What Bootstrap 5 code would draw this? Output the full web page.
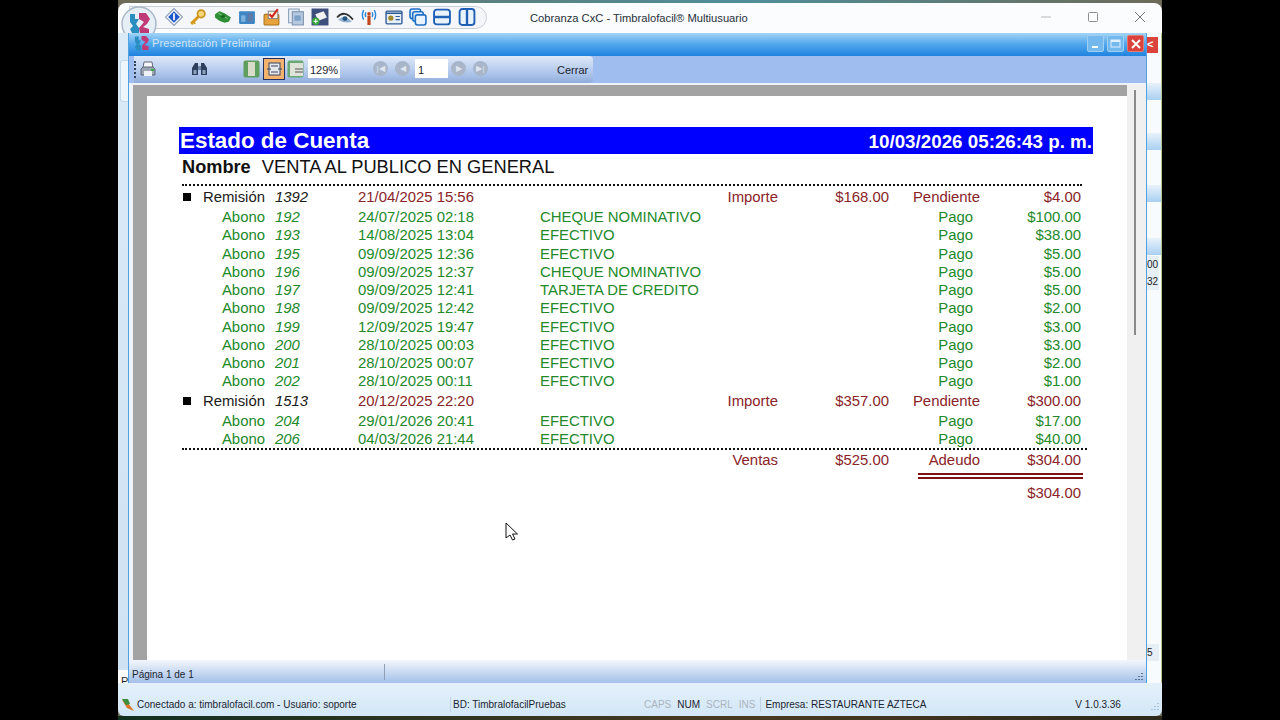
<!DOCTYPE html>
<html lang="es">
<head>
    <meta charset="UTF-8">
    <title>Cobranza CxC - Timbralofacil Multiusuario</title>
    <link href="https://cdn.jsdelivr.net/npm/bootstrap@5.3.0/dist/css/bootstrap.min.css" rel="stylesheet">
    <style>
        html, body { height: 720px; overflow: hidden; background: #000; }
        body { font-family: "Liberation Sans", Arial, sans-serif; font-size: 11px; color: #1c2530; }

        /* ventana principal */
        .app { width: 1044px; height: 720px; margin-left: 118px; padding-top: 3px; background: linear-gradient(90deg, #6d6a58, #4f8f9a 60%, #6d6a58); position: relative; }
        .app-title { height: 30px; background: #fbfcfd; border-radius: 8px 8px 0 0; overflow: hidden; position: relative; }
        .pill { margin-left: 11px; margin-top: -2px; height: 23px; width: 358px; border: 1px solid #c9cfd8; border-radius: 0 12px 12px 0; background: #f4f6f9; gap: 6.4px; padding-left: 35px; }
        .pill svg { width: 18px; height: 18px; flex: none; }
        .app-name { position: absolute; left: 412px; top: 7px; font-size: 11.2px; color: #27303a; }
        .win-btns { margin-left: auto; gap: 35px; padding-right: 16px; margin-top: -2px; }
        .logo { position: absolute; left: 3px; top: 3px; width: 36px; height: 36px; z-index: 3; }
        .app-body { height: 650px; background: linear-gradient(#dceaf7, #cfe2f3); position: relative; }
        .app-status { height: 33px; padding-top: 10px; background: linear-gradient(#e4f1fb, #d3e7f7); border-radius: 0 0 6px 6px; display: flex; align-items: center; font-size: 10px; position: relative; }
        .app-status span { white-space: nowrap; }
        .st-ico { margin-left: 3px; margin-right: -16px; flex: none; }
        .st-a { width: 333px; padding-left: 18px; }
        .st-b { width: 194px; border-left: 1px solid #c2d3e2; padding-left: 2px; margin-left: -2px; }
        .st-k { color: #aab4bf; }
        .st-on { color: #1c2530; }
        .st-sep { margin-left: 6px; }
        .st-emp { margin-left: 5px; padding-left: 4px; border-left: 1px solid #c2d3e2; }
        .st-ver { margin-left: 149px; }
        .st-grip { position: absolute; right: 2px; bottom: 3px; }
        .desk-bottom { height: 4px; background: linear-gradient(90deg, #12301f, #4a3a22 60%, #2c2a1c); }

        /* ventanas de atrás, solo se ven los bordes */
        .behind { position: absolute; left: 1029px; top: 0; width: 15px; height: 650px; font-size: 10px; background: #f7fbfe; border-right: 1px solid #b9c48f; }
        .behind-x { position: absolute; left: 0; top: 4px; width: 11px; height: 16px; background: #d9433b; color: #fff; font-size: 11px; font-weight: 700; line-height: 15px; }
        .tile { position: absolute; left: 0; width: 14px; height: 17px; background: linear-gradient(#e8f2fb, #a9d0f1); }
        .t1 { top: 50px; } .t2 { top: 100px; } .t3 { top: 152px; } .t4 { top: 205px; }
        .behind-t { position: absolute; left: 0; width: 12px; color: #222; background: #e6eef6; line-height: 17px; }
        .b00 { top: 223px; } .b32 { top: 240px; } .b5 { top: 611px; }
        .left-tab { position: absolute; left: 2px; top: 27px; width: 8px; height: 42px; background: #eef5fb; border: 1px solid #c4d8ea; border-right: 0; border-radius: 3px 0 0 3px; }
        .left-p { position: absolute; left: 0; top: 637px; width: 10px; height: 16px; background: #fff; padding: 3px 0 0 3px; font-size: 11px; }

        /* ventana hija */
        .child { position: absolute; left: 10px; top: 0; width: 1019px; height: 653px; border: 1px solid #4ea2e4; border-top: 0; background: #fff; display: flex; flex-direction: column; }
        .child-title { height: 23px; flex: none; background: linear-gradient(#a4d4f6, #55aaed 45%, #1f83e0); color: #cfe4f6; font-size: 11px; letter-spacing: .1px; padding-left: 23px; padding-bottom: 2px; position: relative; }
        .child-logo { position: absolute; left: 4px; top: 2px; width: 17px; height: 17px; }
        .child-btns { margin-left: auto; gap: 3px; padding-right: 2px; }
        .cb { width: 17px; height: 17px; border-radius: 2px; background: #74b9ee; border: 1px solid #9fd0f4; display: flex; align-items: center; justify-content: center; }
        .cb-x { background: #d9433b; border-color: #e4776f; }
        .tool { height: 27px; flex: none; background: #a0bdf0; padding-left: 5px; position: relative; }
        .tool-bar { width: 459px; height: 27px; background: linear-gradient(#dfe9f8, #a9c2e9 70%, #8fabd8); border-radius: 0 4px 4px 0; position: relative; }
        .tool-bar > * { position: absolute; }
        .grip { left: 0; top: 5px; height: 17px; border-left: 2px dotted #30415c; }
        .i-print { left: 5px; top: 4px; }
        .i-bin { left: 57px; top: 5px; }
        .i-v1 { left: 109px; top: 4px; }
        .tb-sel { left: 129px; top: 2px; width: 22px; height: 22px; background: #f3b36e; border: 1px solid #25305c; }
        .i-v2 { left: 133px; top: 6px; }
        .i-v3 { left: 153px; top: 4px; }
        .tb-box { background: #fff; height: 19px; top: 3px; padding: 3px 0 0 2px; font-size: 11px; }
        .box-zoom { left: 174px; width: 32px; }
        .box-pag { left: 281px; width: 33px; padding-left: 3px; }
        .nav-b { top: 5px; width: 15px; height: 15px; border-radius: 50%; background: #a9b6c9; color: #dfe6ef; font-size: 8px; line-height: 15px; text-align: center; }
        .n1 { left: 239px; } .n2 { left: 261px; } .n3 { left: 317px; } .n4 { left: 339px; }
        .cerrar { left: 423px; top: 6px; font-size: 11px; color: #1c2530; }

        .view { flex: 1; display: flex; min-height: 0; background: #eef3fa; padding: 2px 0 0 4px; position: relative; }
        .sheet-wrap { flex: 1; background: #a3a3a3; padding: 11px 0 0 14px; display: flex; min-width: 0; }
        .sheet { flex: 1; background: #fff; padding: 31px 0 0 32px; position: relative; }
        .vscroll { width: 19px; background: #f0f0f0; padding: 5px 0 0 7px; }
        .vscroll i { display: block; width: 2px; height: 245px; background: #8a8a8a; }

        /* reporte */
        .rep { width: 914px; font-size: 14.9px; }
        .rep-head { height: 27px; background: #0000ff; color: #fff; font-weight: 700; padding: 0 1px; }
        .rep-head .h1t { font-size: 22.4px; line-height: 27px; }
        .rep-head .h2t { font-size: 18.8px; line-height: 30px; }
        .rep-name { height: 30px; padding: 0 0 0 3px; font-size: 18.3px; line-height: 26px; color: #111; white-space: nowrap; }
        .rep-name b { font-size: 18.2px; margin-right: 6px; }
        .dots { width: 900px; margin-left: 3px; border-top: 2px dotted #111; }
        .dots-fin { width: 905px; }
        .gap-ini { height: 2px; }
        .fila { display: grid; grid-template-columns: 86px 10px 83px 182px 238px 111px 91px 101px; width: 902px; height: 18.25px; line-height: 18px; white-space: nowrap; }
        .fila > span { display: block; }
        .rem { color: #8a2429; height: 20px; }
        .abo + .rem { margin-top: 1.400px; }
        .rem .lbl, .rem .num { color: #1a1a1a; }
        .abo { color: #23892a; }
        .lbl { text-align: right; }
        .num { font-style: italic; }
        .r { text-align: right; }
        .pago { text-align: right; padding-right: 7px; }
        .col5 { grid-column: 5; } .col6 { grid-column: 6; } .col7 { grid-column: 7; } .col8 { grid-column: 8; }
        .bul { position: absolute; left: 36px; width: 8px; height: 8px; background: #000; margin-top: 5px; }
        .tot { color: #8a2429; }
        .tot-1 { margin-top: 1px; }
        .tot-2 { margin-top: 5px; }
        .doble { width: 165px; margin-left: 739px; margin-top: 3px; height: 6px; border-top: 2px solid #7c1116; border-bottom: 2px solid #7c1116; }
        .status2 { height: 25px; flex: none; background: linear-gradient(#f3f7fc, #b6cdee 70%, #9ebbe8); position: relative; padding: 7px 0 0 3px; font-size: 10px; }
        .status2 i { position: absolute; left: 255px; top: 4px; height: 16px; border-left: 1px solid #8f9fb5; }
        .status2 svg { position: absolute; right: 2px; bottom: 3px; }
        .cursor { position: absolute; left: 358px; top: 426px; z-index: 5; width: 13px; height: 19px; }
    </style>
</head>
<body>
    <div class="app">
        <div class="app-title d-flex align-items-center">
            <div class="pill d-flex align-items-center">
                <!-- barra de acceso rapido -->
                <svg viewBox="0 0 17 17"><path d="M8.500 .5l8 8-8 8-8-8z" fill="#eef2f8" stroke="#8a9ab0"/><path d="M8.500 3l5.500 5.500-5.500 5.500-5.500-5.500z" fill="#1f56c9"/><rect x="7.700" y="5" width="1.600" height="6.500" fill="#fff"/></svg>
                <svg viewBox="0 0 17 17"><circle cx="11.500" cy="5.500" r="3.500" fill="#f6d778" stroke="#c8921c" stroke-width="1.600"/><path d="M9 8l-7 7" stroke="#d59a1c" stroke-width="2.800"/><path d="M4 13l2 2" stroke="#d59a1c" stroke-width="1.500"/></svg>
                <svg viewBox="0 0 17 17"><path d="M1 6l4-3 5 2 6 4-2 4-4 1-5-2-4-3z" fill="#2e8f35"/><path d="M4 5l9 5" stroke="#7bc77f"/><ellipse cx="8.500" cy="8" rx="2" ry="1.300" fill="#1a6422"/></svg>
                <svg viewBox="0 0 17 17"><rect x="1" y="3" width="15" height="12" rx="1" fill="#3f86c4"/><rect x="3" y="7" width="4" height="6" fill="#7fb1dd"/><rect x="9" y="5" width="5" height="8" fill="#5e78a8"/></svg>
                <svg viewBox="0 0 17 17"><rect x="1" y="6" width="14" height="10" rx="1" fill="#e8a33a" stroke="#a8701c"/><rect x="5" y="3" width="9" height="7" fill="#fdf3dc" stroke="#888"/><path d="M6 6l2.500 2.500L14 1" fill="none" stroke="#d3261f" stroke-width="2"/></svg>
                <svg viewBox="0 0 17 17"><rect x="1.500" y="1" width="10" height="13" fill="#e6ecf4" stroke="#8aa0bb"/><rect x="5" y="3.500" width="10.500" height="12.500" fill="#b4c8e0" stroke="#7f93ad"/><rect x="7" y="7" width="6" height="5" fill="#7fa0c8"/></svg>
                <svg viewBox="0 0 17 17"><rect x=".5" y=".5" width="16" height="16" fill="#3f4f7d"/><path d="M4 6l8-3 3 6-8 3z" fill="#f2f2f2"/><circle cx="4.500" cy="12.500" r="3.500" fill="#38a53e"/><path d="M4.500 10.500v4M2.500 12.500h4" stroke="#fff"/></svg>
                <svg viewBox="0 0 17 17"><path d="M1 9Q8 1 16 11" fill="none" stroke="#333" stroke-width="1.700"/><path d="M2 11Q8 5 15 13Q8 15 2 11z" fill="#8fb0cf"/><circle cx="8.500" cy="10" r="2.300" fill="#24547f"/></svg>
                <svg viewBox="0 0 17 17"><path d="M8.500 7v9" stroke="#c2461f" stroke-width="3"/><circle cx="8.500" cy="5.500" r="1.700" fill="#c2461f"/><path d="M3.500 2Q1 7 3.500 11M13.500 2Q16 7 13.500 11M5.500 4Q4.500 6 5.500 8.500M11.500 4Q12.500 6 11.500 8.500" fill="none" stroke="#2a86d6" stroke-width="1.300"/></svg>
                <svg viewBox="0 0 17 17"><rect x="1" y="3" width="15" height="12" rx="1" fill="#e8eef6" stroke="#2c5a94" stroke-width="1.300"/><path d="M1 5h15" stroke="#2c5a94" stroke-width="1.500"/><circle cx="5.500" cy="9.500" r="2.500" fill="#a08a2c"/><path d="M10 8h4M10 11h4" stroke="#2c5a94"/></svg>
                <svg viewBox="0 0 17 17"><rect x="1" y="1" width="10" height="9" rx="2" fill="#dcebfa" stroke="#1f6fc4" stroke-width="1.500"/><rect x="3.500" y="3.500" width="10" height="9" rx="2" fill="#dcebfa" stroke="#1f6fc4" stroke-width="1.500"/><rect x="6" y="6.500" width="10" height="9.500" rx="2" fill="#eaf3fc" stroke="#1f6fc4" stroke-width="1.500"/></svg>
                <svg viewBox="0 0 17 17"><rect x="1" y="1.500" width="15" height="14" rx="2.500" fill="#eaf3fc" stroke="#1f5fb4" stroke-width="1.800"/><path d="M1 8.500h15" stroke="#1f5fb4" stroke-width="2.200"/></svg>
                <svg viewBox="0 0 17 17"><rect x="1.500" y="1" width="14" height="15" rx="2.500" fill="#eaf3fc" stroke="#1f5fb4" stroke-width="1.800"/><path d="M8.500 1v15" stroke="#1f5fb4" stroke-width="2.200"/></svg>
            </div>
            <span class="app-name">Cobranza CxC - Timbralofacil® Multiusuario</span>
            <div class="win-btns d-flex align-items-center">
                <svg width="12" height="12" viewBox="0 0 12 12"><path d="M1 6h10" stroke="#b5b9bd"/></svg>
                <svg width="12" height="12" viewBox="0 0 12 12"><rect x="1.500" y="1.500" width="9" height="9" rx="1" fill="none" stroke="#8b8f94"/></svg>
                <svg width="12" height="12" viewBox="0 0 12 12"><path d="M1 1l10 10M11 1L1 11" stroke="#70757a"/></svg>
            </div>
            <svg class="logo" viewBox="0 0 36 36">
                <circle cx="18" cy="18" r="17" fill="#e6eef6" stroke="#aab8c8" stroke-width="1.500"/>
                <path d="M9 8h5v5h4l-3 5 3 4v7h-6l-3-6 3-3-3-4z" fill="#2a8fc0"/>
                <path d="M18 7h7l4 6-3 5-4 3 6 2v5h-9l-1-6 5-6-5-3z" fill="#c03a78"/>
            </svg>
        </div>

        <div class="app-body">
            <div class="left-tab"></div>
            <div class="left-p">P</div>
            <div class="behind">
                <div class="tile t1"></div><div class="tile t2"></div><div class="tile t3"></div><div class="tile t4"></div>
                <div class="behind-x">&lt;</div>
                <div class="behind-t b00">00</div>
                <div class="behind-t b32">32</div>
                <div class="behind-t b5">5</div>
            </div>

            <div class="child">
                <div class="child-title d-flex align-items-center">
                    <svg class="child-logo" viewBox="0 0 36 36">
                        <path d="M4 3h8v8h5l-4 8 4 5v9H8l-4-8 4-5-4-6z" fill="#2a8fc0"/>
                        <path d="M18 2h10l6 8-4 7-6 4 9 3v8H20l-1-9 7-8-8-5z" fill="#c03a78"/>
                    </svg>
                    <span>Presentación Preliminar</span>
                    <div class="child-btns d-flex">
                        <div class="cb"><svg width="9" height="9" viewBox="0 0 9 9"><path d="M1 8h6" stroke="#fff" stroke-width="2"/></svg></div>
                        <div class="cb"><svg width="11" height="9" viewBox="0 0 11 9"><rect x="1" y="1" width="9" height="7" fill="none" stroke="#dff0fc"/><path d="M1 2h9" stroke="#dff0fc" stroke-width="2"/></svg></div>
                        <div class="cb cb-x"><svg width="10" height="10" viewBox="0 0 10 10"><path d="M1 1l8 8M9 1L1 9" stroke="#fff" stroke-width="2"/></svg></div>
                    </div>
                </div>
                <div class="tool">
                    <div class="tool-bar">
                        <div class="grip"></div>
                        <svg class="i-print" width="18" height="18" viewBox="0 0 18 18"><path d="M5 2h8l1 6H4z" fill="#f6f8fb" stroke="#667"/><path d="M2 9l2-2h10l2 2v6H2z" fill="#9aa6b4" stroke="#5d6876"/><rect x="5" y="11" width="8" height="5" fill="#eef1f6"/><rect x="12" y="9" width="3" height="2" fill="#3bab46"/></svg>
                        <svg class="i-bin" width="17" height="16" viewBox="0 0 17 16"><path d="M1 14V7l3-5h3v12zM10 14V2h3l3 5v7z" fill="#2d3f5c"/><rect x="7" y="5" width="3" height="4" fill="#6f84a3"/><rect x="2.500" y="9" width="3" height="4" fill="#8ca3c0"/><rect x="11.500" y="9" width="3" height="4" fill="#8ca3c0"/></svg>
                        <svg class="i-v1" width="17" height="18" viewBox="0 0 17 18"><rect x=".5" y=".5" width="16" height="17" rx="2" fill="#5f9e5f"/><rect x="5" y="2" width="7" height="14" fill="#d8dcc8"/></svg>
                        <div class="tb-sel"></div>
                        <svg class="i-v2" width="15" height="14" viewBox="0 0 15 14"><rect x="2" y="1" width="11" height="12" fill="#e6e8ee" stroke="#39465f"/><path d="M0 7h4M11 7h4M4 4h7M4 10h7" stroke="#39465f"/></svg>
                        <svg class="i-v3" width="17" height="18" viewBox="0 0 17 18"><rect x=".5" y=".5" width="16" height="17" rx="2" fill="#6aa873"/><rect x="3" y="3" width="13" height="13" fill="#dde3d8"/><path d="M8 9h8M8 12h8" stroke="#555"/></svg>
                        <div class="tb-box box-zoom">129%</div>
                        <div class="nav-b n1">|◀</div>
                        <div class="nav-b n2">◀</div>
                        <div class="tb-box box-pag">1</div>
                        <div class="nav-b n3">▶</div>
                        <div class="nav-b n4">▶|</div>
                        <div class="cerrar">Cerrar</div>
                    </div>
                </div>

                <div class="view">
                    <div class="sheet-wrap">
                        <div class="sheet">
                            <div class="rep">
                                <div class="rep-head d-flex justify-content-between"><span class="h1t">Estado de Cuenta</span><span class="h2t">10/03/2026 05:26:43 p. m.</span></div>
                                <div class="rep-name"><b>Nombre</b> VENTA AL PUBLICO EN GENERAL</div>
                                <div class="dots"></div>
                                <div class="gap-ini"></div>
                                <div id="filas"></div>
                                <div class="dots dots-fin"></div>
                                <div class="fila tot tot-1"><span class="r col5">Ventas</span><span class="r col6">$525.00</span><span class="r col7">Adeudo</span><span class="r col8">$304.00</span></div>
                                <div class="doble"></div>
                                <div class="fila tot tot-2"><span class="r col8">$304.00</span></div>
                            </div>
                            <svg class="cursor" viewBox="0 0 13 19"><path d="M1 1v15l4-3 2.500 5 2.500-1-2.500-5h5z" fill="#fff" stroke="#111"/></svg>
                        </div>
                    </div>
                    <div class="vscroll"><i></i></div>
                </div>
                <div class="status2">Página 1 de 1<i></i>
                    <svg width="10" height="10" viewBox="0 0 10 10"><path d="M8 1v1M5 4v1M8 4v1M2 7v1M5 7v1M8 7v1" stroke="#3d5578" stroke-width="1.500"/></svg>
                </div>
            </div>
        </div>

        <div class="app-status">
            <svg class="st-ico" width="14" height="14" viewBox="0 0 14 14"><path d="M1 2l6 3 6 8-7-3z" fill="#d9742a"/><path d="M1 1l6 0 2 5-4 1z" fill="#3d8f3d"/></svg>
            <span class="st-a">Conectado a: timbralofacil.com - Usuario: soporte</span>
            <span class="st-b">BD: TimbralofacilPruebas</span>
            <span class="st-k">CAPS</span>
            <span class="st-on st-sep">NUM</span>
            <span class="st-k st-sep">SCRL</span>
            <span class="st-k st-sep">INS</span>
            <span class="st-emp">Empresa: RESTAURANTE AZTECA</span>
            <span class="st-ver">V 1.0.3.36</span>
            <svg class="st-grip" width="12" height="12" viewBox="0 0 12 12"><path d="M10 2v1M7 5v1M10 5v1M4 8v1M7 8v1M10 8v1" stroke="#9fc0dc" stroke-width="1.800"/></svg>
        </div>
        <div class="desk-bottom"></div>
    </div>

    <script>
        // filas del estado de cuenta
        const filas = [
            ['r', '1392', '21/04/2025 15:56', '$168.00', '$4.00'],
            ['a', '192', '24/07/2025 02:18', 'CHEQUE NOMINATIVO', '$100.00'],
            ['a', '193', '14/08/2025 13:04', 'EFECTIVO', '$38.00'],
            ['a', '195', '09/09/2025 12:36', 'EFECTIVO', '$5.00'],
            ['a', '196', '09/09/2025 12:37', 'CHEQUE NOMINATIVO', '$5.00'],
            ['a', '197', '09/09/2025 12:41', 'TARJETA DE CREDITO', '$5.00'],
            ['a', '198', '09/09/2025 12:42', 'EFECTIVO', '$2.00'],
            ['a', '199', '12/09/2025 19:47', 'EFECTIVO', '$3.00'],
            ['a', '200', '28/10/2025 00:03', 'EFECTIVO', '$3.00'],
            ['a', '201', '28/10/2025 00:07', 'EFECTIVO', '$2.00'],
            ['a', '202', '28/10/2025 00:11', 'EFECTIVO', '$1.00'],
            ['r', '1513', '20/12/2025 22:20', '$357.00', '$300.00'],
            ['a', '204', '29/01/2026 20:41', 'EFECTIVO', '$17.00'],
            ['a', '206', '04/03/2026 21:44', 'EFECTIVO', '$40.00']
        ];
        const cont = document.getElementById('filas');
        cont.innerHTML = filas.map(f => f[0] === 'r'
            ? `<div class="fila rem"><i class="bul"></i><span class="lbl">Remisión</span><span></span><span class="num">${f[1]}</span><span>${f[2]}</span><span class="r">Importe</span><span class="r">${f[3]}</span><span class="r">Pendiente</span><span class="r">${f[4]}</span></div>`
            : `<div class="fila abo"><span class="lbl">Abono</span><span></span><span class="num">${f[1]}</span><span>${f[2]}</span><span>${f[3]}</span><span></span><span class="pago">Pago</span><span class="r">${f[4]}</span></div>`
        ).join('');
    </script>
    <script src="https://cdn.jsdelivr.net/npm/bootstrap@5.3.0/dist/js/bootstrap.bundle.min.js"></script>
</body>
</html>
